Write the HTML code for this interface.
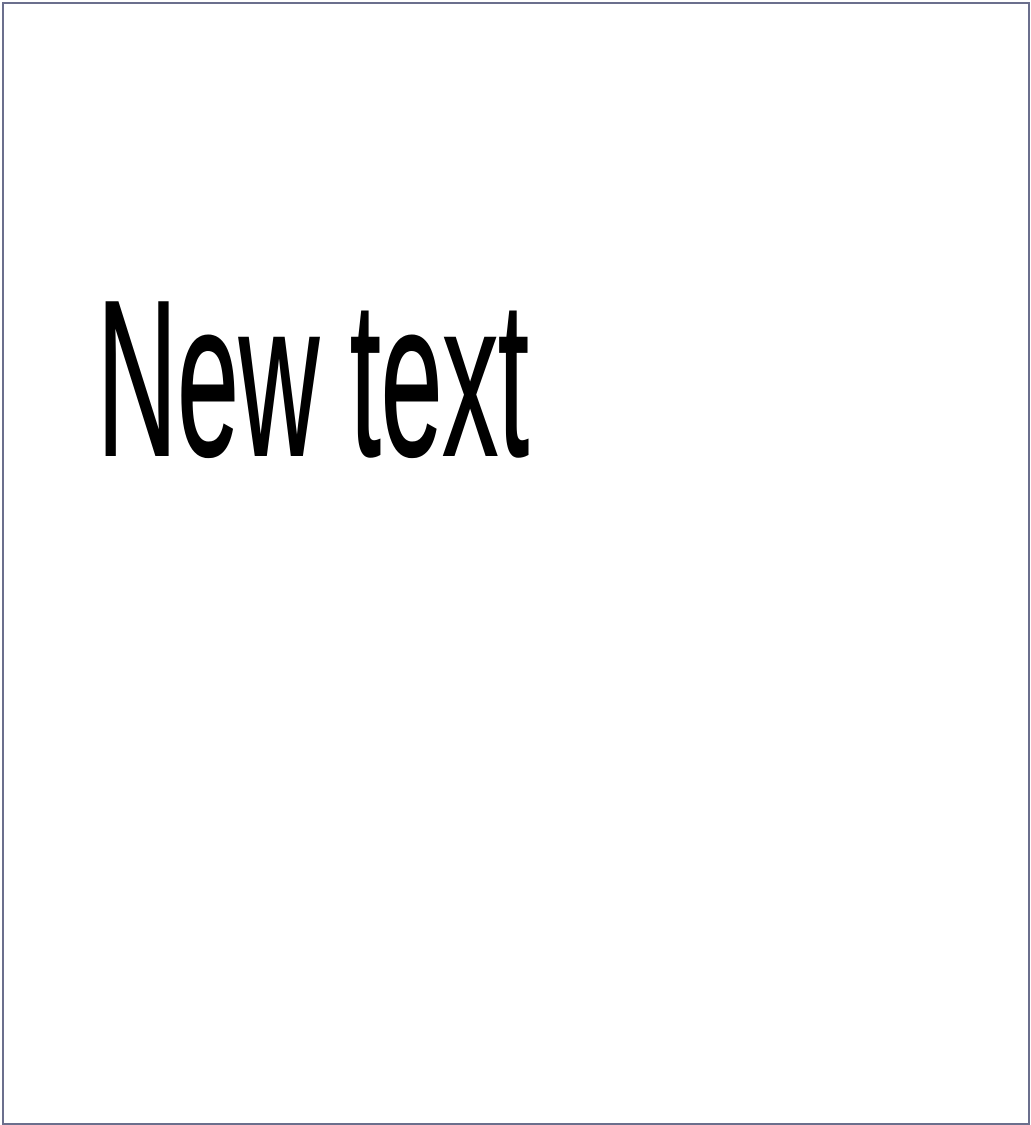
<!DOCTYPE html>
<html><head><meta charset="utf-8"><style>
html,body{margin:0;padding:0;background:#fff;width:1031px;height:1125px;overflow:hidden;position:relative}
.box{position:absolute;left:2px;top:2px;width:1024px;height:1119px;border:2px solid #6b6f8d;background:#fff}
.t{position:absolute;left:97px;top:268px;font-family:"Liberation Sans",Arial,sans-serif;font-size:222px;line-height:222px;color:#000;white-space:nowrap;transform:scaleX(0.50);transform-origin:0 0;-webkit-text-stroke:2px #000}
</style></head><body>
<div class="box"></div>
<div class="t">New text</div>
</body></html>
